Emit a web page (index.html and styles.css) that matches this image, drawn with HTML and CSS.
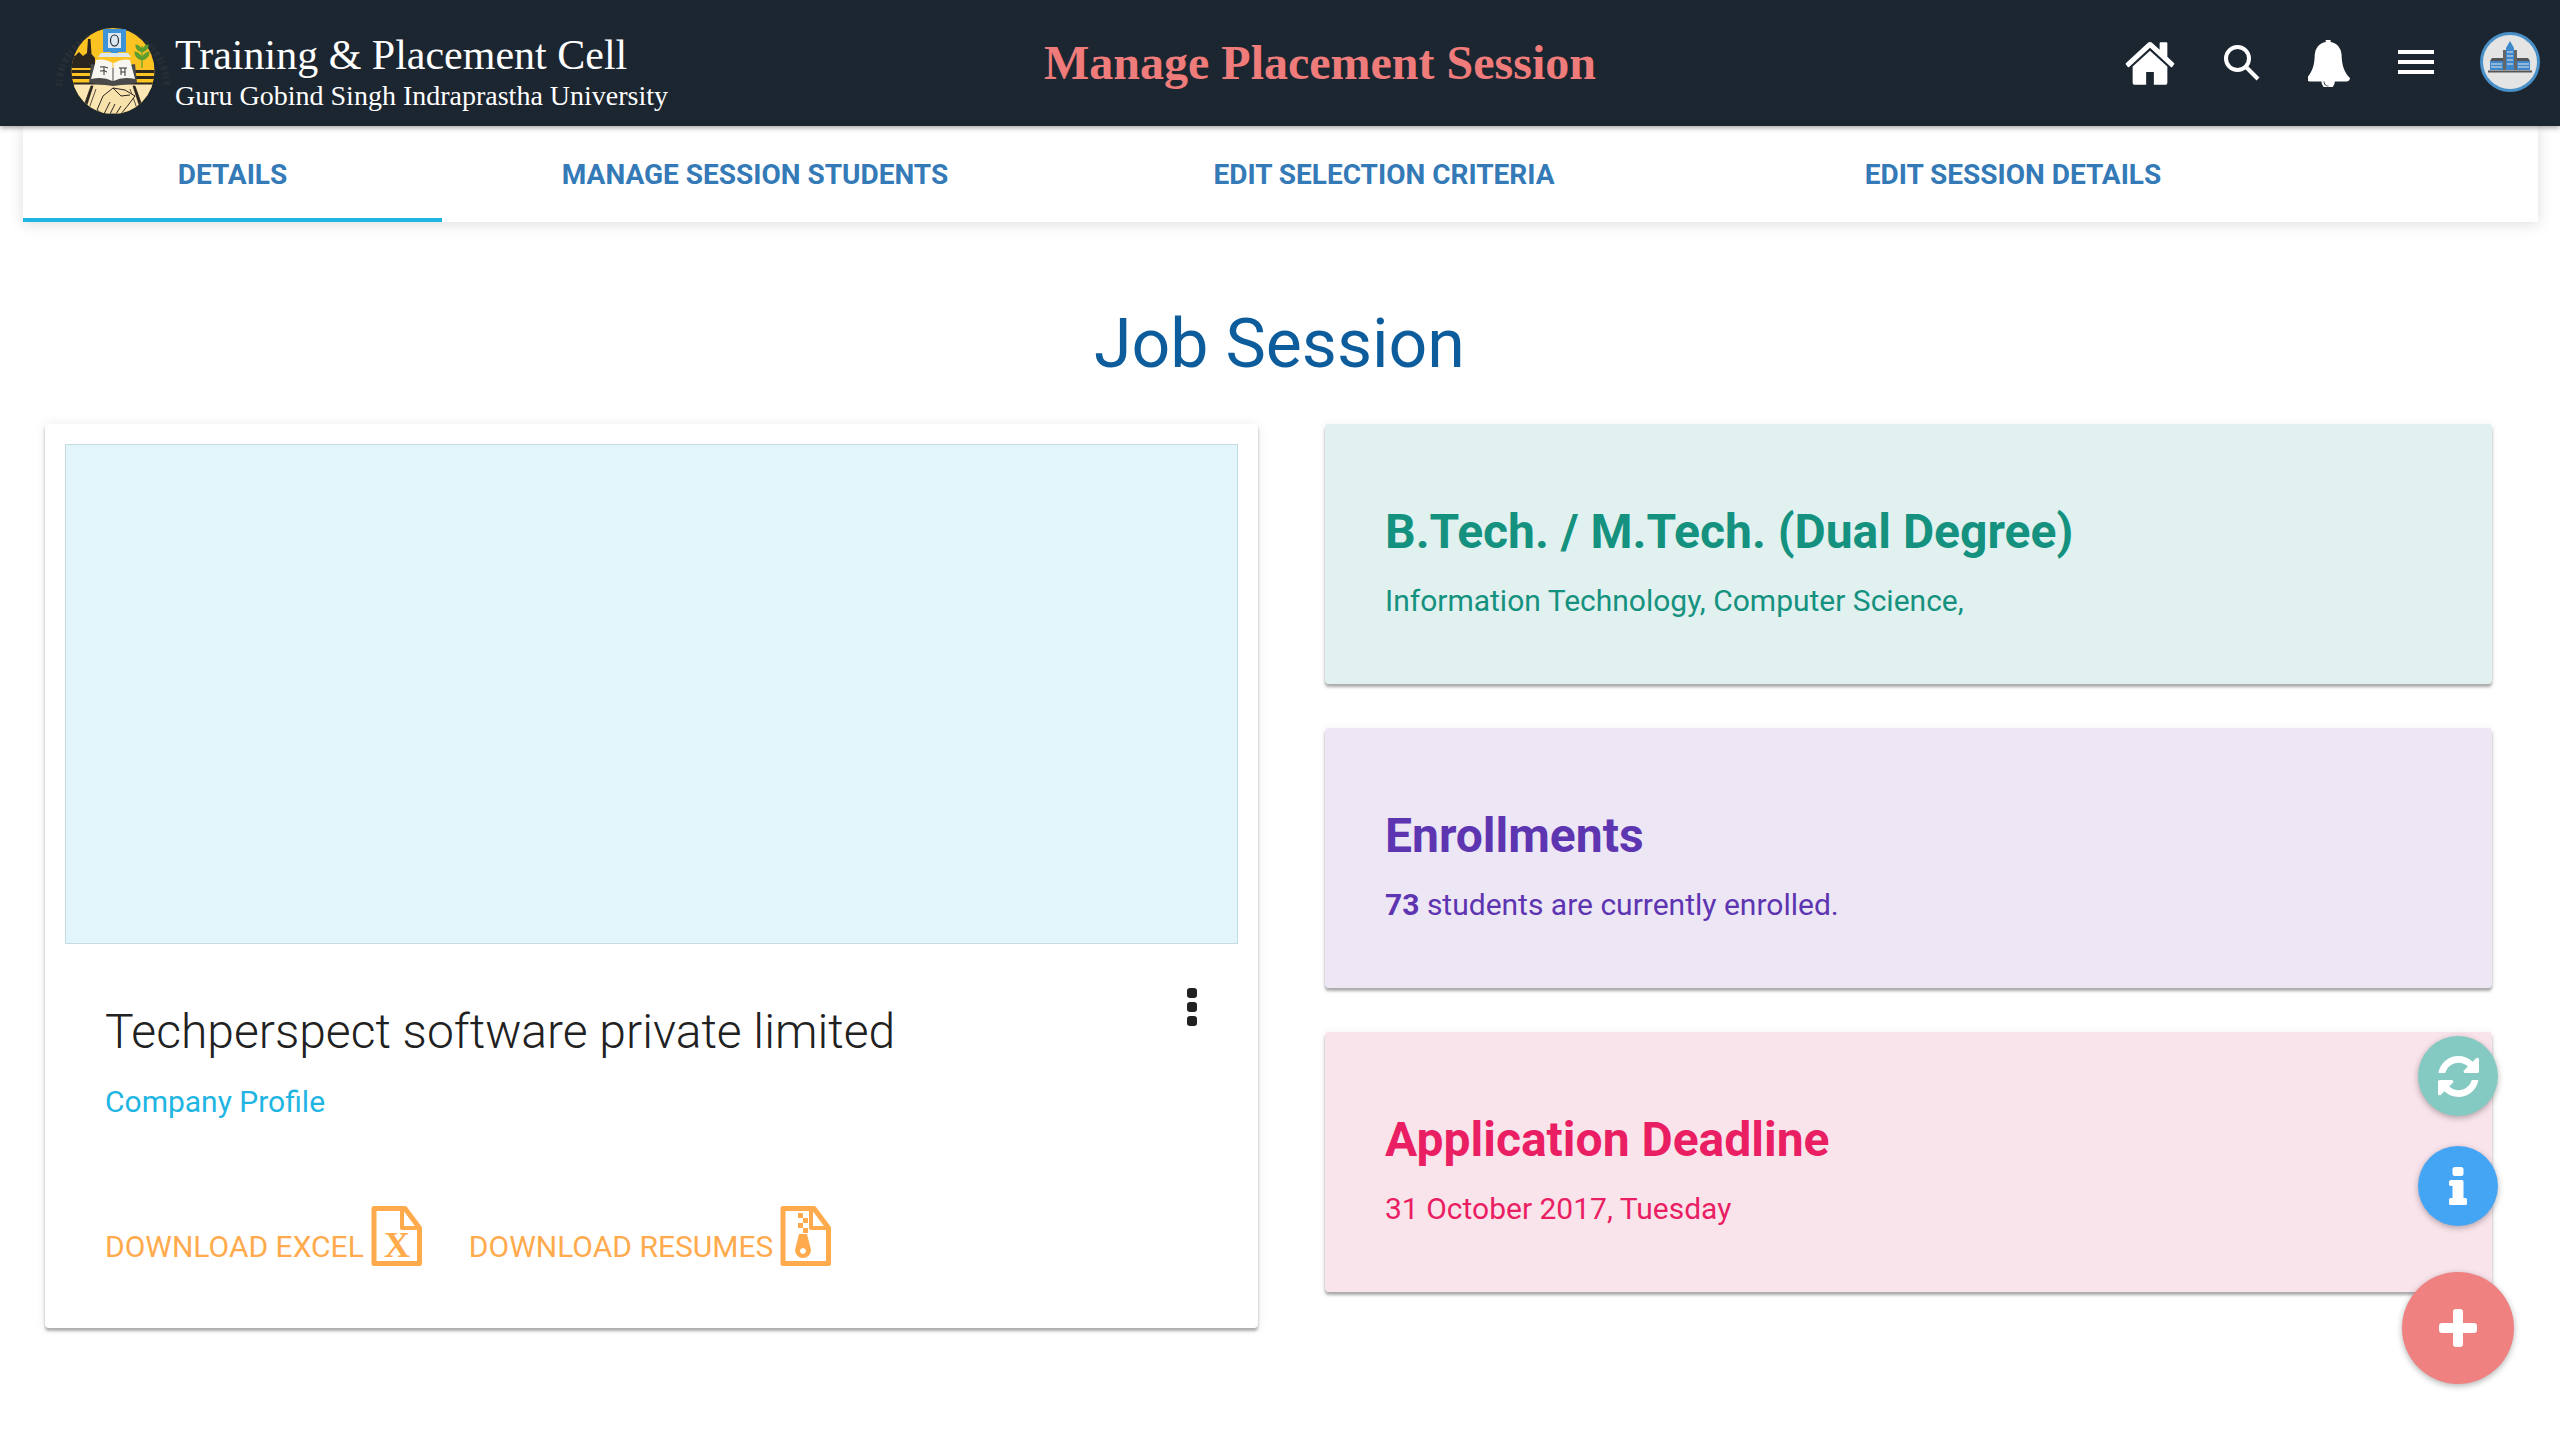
FILE: index.html
```html
<!DOCTYPE html>
<html lang="en">
<head>
<meta charset="utf-8">
<title>Manage Placement Session</title>
<link rel="stylesheet" href="styles.css">
</head>
<body>
<header class="topbar">
  <div class="brand">
    <svg class="logo" viewBox="0 0 92 92" aria-hidden="true">
      <path d="M-8 62 A54 54 0 1 1 100 62" fill="none" stroke="#262d35" stroke-width="7" stroke-dasharray="3 1.500 2 3 4 2"/>
      <clipPath id="lc"><ellipse cx="46" cy="47" rx="41.500" ry="43"/></clipPath>
      <g clip-path="url(#lc)">
        <rect x="0" y="0" width="92" height="92" fill="#fdc322"/>
        <path d="M0 44 V28 L8 32 L12 28 L16 32 L20 29 L21 15 L23.500 15 L24.500 30 L28 34 V44Z" fill="#2c2620"/>
        <path d="M0 46 H28 V49 H0Z M0 52 H26 V55 H0Z M64 46 H92 V49 H64Z M66 52 H92 V55 H66Z" fill="#2c2620"/>
        <path d="M0 60 H92 V92 H0Z" fill="#fbe6b4"/>
        <path d="M0 58.500 H92 V60.500 H0Z" fill="#2c2620"/>
        <path d="M14 90 L24 62 H26 L17 90Z M78 90 L68 62 H66 L75 90Z M20 90 L29 65 M72 90 L63 65" fill="#2c2620" stroke="#2c2620" stroke-width=".8"/>
        <path d="M30 86 L36 72 L46 64 L58 66 L68 72 L62 80 L54 90 H36Z" fill="#f8e2ac" stroke="#2c2620" stroke-width="1"/>
        <path d="M46 64 L54 72 L63 71 M37 90 L43 78 M43 90 L48 80 M49 90 L54 82" stroke="#2c2620" stroke-width="1" fill="none"/>
        <path d="M0 80 L20 92 H0Z M92 80 L72 92 H92Z M26 88 Q46 96 66 88 V92 H26Z" fill="#2c2620"/>
      </g>
      <rect x="36" y="5" width="23" height="23" rx="1" fill="#3e92d6"/>
      <rect x="41" y="9" width="13" height="15" fill="#dbe8f2"/>
      <ellipse cx="47.500" cy="16.500" rx="4" ry="5.500" fill="none" stroke="#2a2a2a" stroke-width="1.200"/>
      <rect x="44" y="28" width="7" height="3" fill="#3e92d6"/>
      <path d="M31 33 L34 29 H61 L64 33Z" fill="#dbe8f2"/>
      <path d="M24 40 L46 44 L68 40 L70 59 L46 62 L22 59Z" fill="#4a4a4a"/>
      <path d="M29 36 Q38 34 45.500 39 V57 Q36 52 24 55Z M46.500 39 Q55 34 63 36 L68 55 Q56 52 46.500 57Z" fill="#f7f6f1"/>
      <path d="M33 43 Q38 42 41 44 M37 43 V51 M33 47 Q38 46 40 48 M52 44 H60 M54 44 V51 M58 44 V52 M54 48 H58" stroke="#333" stroke-width="1" fill="none"/>
      <path d="M75 44 V22 M75 28 Q69 26 69 21 Q74 22 75 28 M75 28 Q81 26 81 21 Q76 22 75 28 M75 36 Q68 34 68 28 Q74 29 75 36 M75 36 Q82 34 82 28 Q76 29 75 36" fill="#5d9e2f" stroke="#5d9e2f" stroke-width="1.200"/>
    </svg>
    <div class="brand-text">
      <div class="brand-name">Training &amp; Placement Cell</div>
      <div class="brand-sub">Guru Gobind Singh Indraprastha University</div>
    </div>
  </div>
  <h1 class="page-title">Manage Placement Session</h1>
  <nav class="top-icons">
    <svg class="ic-home" viewBox="0 250 1792 1290" fill="#fff" preserveAspectRatio="none"><path d="M1472 992v480q0 26-19 45t-45 19h-384v-384h-256v384h-384q-26 0-45-19t-19-45v-480q0-1 .5-3t.5-3l575-474 575 474q1 2 1 6zm223-69l-62 74q-8 9-21 11h-3q-13 0-21-7l-692-577-692 577q-12 8-24 7-13-2-21-11l-62-74q-8-10-7-23.500t11-21.500l719-599q32-26 76-26t76 26l244 204v-195q0-14 9-23t23-9h192q14 0 23 9t9 23v408l219 182q10 8 11 21.500t-7 23.500z"/></svg>
    <svg class="ic-search" viewBox="0 0 36 36" fill="none" stroke="#fff"><circle cx="13.500" cy="13.500" r="11.500" stroke-width="4"/><path d="M22 22 L34 34" stroke-width="4"/></svg>
    <svg class="ic-bell" viewBox="128 64 1600 1664" fill="#fff" preserveAspectRatio="none"><path d="M912 1696q0-16-16-16-59 0-101.500-42.500t-42.500-101.500q0-16-16-16t-16 16q0 73 51.500 124.500t124.500 51.500q16 0 16-16zm816-288q0 52-38 90t-90 38h-448q0 106-75 181t-181 75-181-75-75-181h-448q-52 0-90-38t-38-90q50-42 91-88t85-119.500 74.500-158.500 50-206 19.500-260q0-152 117-282.500t307-158.500q-8-19-8-39 0-40 28-68t68-28 68 28 28 68q0 20-8 39 190 28 307 158.500t117 282.500q0 139 19.500 260t50 206 74.500 158.500 85 119.500 91 88z"/></svg>
    <div class="ic-menu"><span></span><span></span><span></span></div>
    <svg class="avatar" viewBox="0 0 60 60" aria-hidden="true">
      <circle cx="30" cy="30" r="28.500" fill="#e4e4e4" stroke="#4a90c8" stroke-width="3"/>
      <path d="M8 38.500 H52 V40.500 H8Z" fill="#555"/>
      <path d="M26 16 L30 9 L34 16 V38 H26Z" fill="#3d87cc"/>
      <path d="M23 18 H26 V38 H23Z M34 18 H37 V38 H34Z" fill="#666"/>
      <path d="M10 29 H23 V38 H10Z M37 29 H50 V38 H37Z" fill="#3d87cc"/>
      <path d="M12 26 H23 V29 H10Z M37 26 H48 L50 29 H37Z" fill="#555"/>
      <path d="M27 20 H33 M27 24 H33 M27 28 H33 M27 32 H33 M11 32 H22 M38 32 H49 M11 35 H22 M38 35 H49" stroke="#e4e4e4" stroke-width="1"/>
    </svg>
  </nav>
</header>

<nav class="tabs">
  <a class="tab tab-active">DETAILS</a>
  <a class="tab">MANAGE SESSION STUDENTS</a>
  <a class="tab">EDIT SELECTION CRITERIA</a>
  <a class="tab">EDIT SESSION DETAILS</a>
</nav>

<main class="content">
  <h2 class="section-title">Job Session</h2>
  <div class="columns">
    <article class="company-card">
      <div class="company-image"></div>
      <div class="company-body">
        <div class="company-head">
          <h3 class="company-name">Techperspect software private limited</h3>
          <div class="kebab"><span></span><span></span><span></span></div>
        </div>
        <a class="company-link">Company Profile</a>
        <div class="downloads">
          <a class="download">DOWNLOAD EXCEL
            <svg class="file-ic" viewBox="0 0 51 60" fill="none" stroke="#ffab4d" stroke-width="5"><path d="M3 2.500 H34 L48.500 22 V57.500 H3Z" stroke-linejoin="round"/><path d="M31 3 V22 H48" stroke-linejoin="round" stroke-width="4"/><text class="file-x" x="26" y="51" text-anchor="middle">X</text></svg>
          </a>
          <a class="download">DOWNLOAD RESUMES
            <svg class="file-ic" viewBox="0 0 51 60" fill="none" stroke="#ffab4d" stroke-width="5"><path d="M3 2.500 H34 L48.500 22 V57.500 H3Z" stroke-linejoin="round"/><path d="M31 3 V22 H48" stroke-linejoin="round" stroke-width="4"/><path d="M18 7 H23 V12 H18Z M23 12 H28 V17 H23Z M18 17 H23 V22 H18Z M23 22 H28 V27 H23Z" fill="#ffab4d" stroke="none"/><path fill-rule="evenodd" d="M19 28 H27 L31 44 A8 8 0 0 1 15 44Z M23 42 A3 3 0 1 0 23.010 42Z" fill="#ffab4d" stroke="none"/></svg>
          </a>
        </div>
      </div>
    </article>
    <div class="stats">
      <section class="stat stat-teal">
        <h3 class="stat-title">B.Tech. / M.Tech. (Dual Degree)</h3>
        <p class="stat-text">Information Technology, Computer Science,</p>
      </section>
      <section class="stat stat-purple">
        <h3 class="stat-title">Enrollments</h3>
        <p class="stat-text"><b>73</b> students are currently enrolled.</p>
      </section>
      <section class="stat stat-pink">
        <h3 class="stat-title">Application Deadline</h3>
        <p class="stat-text">31 October 2017, Tuesday</p>
      </section>
    </div>
  </div>
</main>

<div class="fabs">
  <button class="fab fab-teal"><svg viewBox="128 128 1536 1536" fill="#fff"><path d="M1639 1056q0 5-1 7-64 268-268 434.500t-478 166.500q-146 0-282.500-55t-243.500-157l-129 129q-19 19-45 19t-45-19-19-45v-448q0-26 19-45t45-19h448q26 0 45 19t19 45-19 45l-137 137q71 66 161 102t187 36q134 0 250-65t186-179q11-17 53-117 8-23 30-23h192q13 0 22.500 9.500t9.500 22.500zm25-800v448q0 26-19 45t-45 19h-448q-26 0-45-19t-19-45 19-45l138-138q-148-137-349-137-134 0-250 65t-186 179q-11 17-53 117-8 23-30 23h-199q-13 0-22.500-9.500t-9.500-22.500v-7q65-268 270-434.500t480-166.500q146 0 284 55.500t245 156.500l130-129q19-19 45-19t45 19 19 45z"/></svg></button>
  <button class="fab fab-blue"><svg viewBox="0 0 18 38" fill="#fff"><rect x="3.500" y="0" width="11" height="9" rx="2.500"/><path d="M2 13 H13 Q14.500 13 14.500 14.500 V31 H16.500 Q18 31 18 32.500 V36.500 Q18 38 16.500 38 H1.500 Q0 38 0 36.500 V32.500 Q0 31 1.500 31 H3.500 V19 H2 Q0 19 0 17.500 V14.500 Q0 13 2 13Z"/></svg></button>
  <button class="fab fab-red"><svg viewBox="0 0 38 38" fill="#fff"><rect x="14" y="0" width="10" height="38" rx="3"/><rect x="0" y="14" width="38" height="10" rx="3"/></svg></button>
</div>
</body>
</html>
```

FILE: styles.css
```css
* { box-sizing: border-box; }
html, body { margin: 0; padding: 0; height: 1430px; overflow: hidden; }
body { background: #fff; font-family: Roboto, sans-serif; position: relative; }

.topbar {
  height: 126px;
  background: #1c2630;
  display: flex;
  align-items: center;
  position: relative;
  z-index: 2;
  box-shadow: 0 2px 5px rgba(0,0,0,.35);
  padding-left: 67px;
}
.brand { display: flex; align-items: center; width: 977px; }
.logo { width: 92px; height: 92px; flex: none; overflow: visible; margin-top: 14px; }
.brand-text { margin-left: 16px; color: #fff; font-family: "Liberation Serif", serif; padding-top: 16px; }
.brand-name { font-size: 42px; line-height: 48px; }
.brand-sub { font-size: 28px; line-height: 33px; }
.page-title {
  margin: 0;
  width: 551px;
  flex: none;
  white-space: nowrap;
  font: bold 48px/1 "Liberation Serif", serif;
  color: #ef7b7b;
}
.top-icons { position: relative; flex: 1; height: 126px; display: flex; align-items: center; }
.ic-home { width: 54px; height: 43px; margin-left: 528px; flex: none; }
.ic-search { width: 36px; height: 36px; margin-left: 47px; flex: none; margin-top: -1px; }
.ic-bell { width: 42px; height: 47px; margin-left: 48px; flex: none; margin-top: 1px; }
.ic-menu { width: 36px; margin-left: 48px; margin-top: -2px; flex: none; display: flex; flex-direction: column; gap: 6px; }
.ic-menu span { height: 4px; background: #fff; display: block; }
.avatar { width: 60px; height: 60px; margin-left: 46px; flex: none; margin-top: -2px; }

.tabs {
  margin: 0 22px 0 23px;
  height: 96px;
  display: grid;
  grid-template-columns: 419px 626px 632px 626px;
  background: #fff;
  box-shadow: 0 2px 14px rgba(0,0,0,.14);
}
.tab {
  display: flex;
  align-items: center;
  justify-content: center;
  color: #337ab7;
  font-size: 28px;
  font-weight: 700;
  padding-top: 1px;
  white-space: nowrap;
}
.tab-active { border-bottom: 4px solid #1fb5e3; padding: 5px 0 0; }

.content { padding: 0 0 0 45px; }
.section-title {
  margin: 0;
  padding-top: 77px;
  height: 202px;
  font-size: 68px;
  line-height: 90px;
  font-weight: 400;
  color: #0d5c9c;
  text-align: center;
  width: 2469px;
}
.columns { display: grid; grid-template-columns: 1213px 1167px; column-gap: 67px; }

.company-card {
  height: 904px;
  padding: 20px;
  background: #fff;
  border-radius: 4px;
  box-shadow: 0 3px 3px rgba(0,0,0,.3), 0 0 12px rgba(0,0,0,.08);
}
.company-image { height: 500px; background: #e1f5fb; border: 1px solid #c3dbe3; }
.company-body { padding: 0 0 0 40px; }
.company-head { display: flex; justify-content: space-between; height: 132px; }
.company-name { margin: 58px 0 0; font-size: 48px; line-height: 60px; font-weight: 300; color: #212121; white-space: nowrap; }
.kebab { display: flex; flex-direction: column; gap: 4px; margin: 44px 41px 0 0; width: 10px; }
.kebab span { width: 10px; height: 10px; border-radius: 3px; background: #212121; }
.company-link { display: block; margin-top: 8px; font-size: 30px; line-height: 36px; color: #1fb5e3; }
.downloads { display: flex; gap: 47px; margin-top: 86px; }
.download { display: flex; align-items: flex-end; font-size: 30px; line-height: 34px; color: #ffab4d; white-space: nowrap; }
.file-ic { width: 51px; height: 60px; margin: 0 0 -2px 7px; flex: none; }
.file-x { font: bold 36px "Liberation Serif", serif; fill: #ffab4d; stroke: none; }

.stats { display: flex; flex-direction: column; gap: 44px; }
.stat {
  height: 260px;
  padding: 15px 60px 0;
  display: flex;
  flex-direction: column;
  justify-content: center;
  border-radius: 4px;
  box-shadow: 0 3px 3px rgba(0,0,0,.32), 0 0 8px rgba(0,0,0,.06);
}
.stat-title { margin: 0; font-size: 48px; line-height: 60px; font-weight: 700; }
.stat-text { margin: 19px 0 0; font-size: 30px; line-height: 40px; }
.stat-teal { background: #e1f1ef; color: #15917f; }
.stat-purple { background: #ede6f5; color: #5e35b1; }
.stat-pink { background: #fae4ec; color: #e91e63; }

.fabs { position: absolute; left: 0; top: 0; }
.fab {
  position: absolute;
  width: 80px; height: 80px;
  left: 2418px;
  border: 0; padding: 0;
  border-radius: 50%;
  display: flex; align-items: center; justify-content: center;
  box-shadow: 0 2px 6px rgba(0,0,0,.3);
}
.fab-teal { top: 1036px; background: #84cac2; }
.fab-teal svg { width: 41px; height: 41px; }
.fab-blue { top: 1146px; background: #45a5f5; }
.fab-blue svg { width: 18px; height: 38px; }
.fab-red { top: 1272px; left: 2402px; width: 112px; height: 112px; background: #f08181; }
.fab-red svg { width: 38px; height: 38px; }
```
